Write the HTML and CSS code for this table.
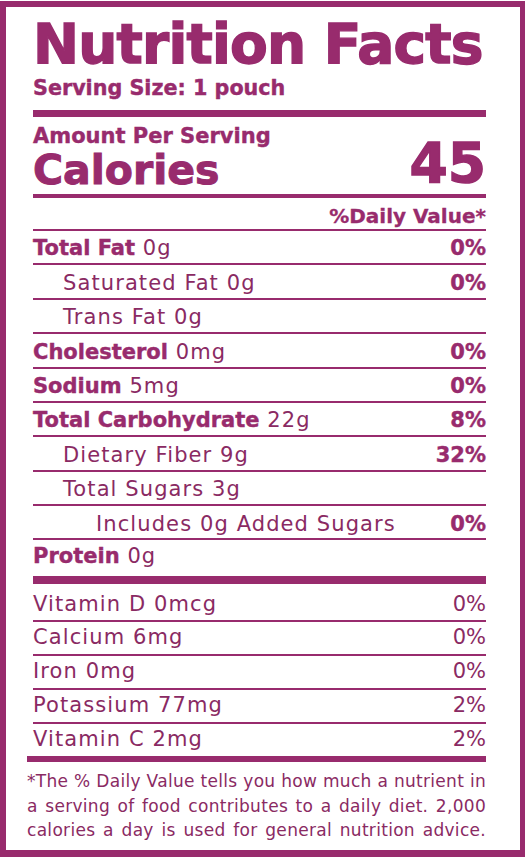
FILE: index.html
```html
<!DOCTYPE html>
<html>
<head>
    <meta charset="utf-8">
    <title>Nutrition Facts</title>
    <link rel="stylesheet" href="styles.css">
</head>
<body>
<div class="label">
    <h1 class="title">Nutrition Facts</h1>
    <div class="serving">Serving Size: 1 pouch</div>
    <div class="bar-thick"></div>

    <div class="cal-block">
        <div class="cal-left">
            <div class="amount">Amount Per Serving</div>
            <div class="cal-label">Calories</div>
        </div>
        <div class="cal-num">45</div>
    </div>
    <div class="bar-mid"></div>

    <div class="dv-head">%Daily Value*</div>

    <div class="rows">
        <div class="row"><span><b>Total Fat</b> 0g</span><b>0%</b></div>
        <div class="row indent"><span>Saturated Fat 0g</span><b>0%</b></div>
        <div class="row indent"><span>Trans Fat 0g</span></div>
        <div class="row"><span><b>Cholesterol</b> 0mg</span><b>0%</b></div>
        <div class="row"><span><b>Sodium</b> 5mg</span><b>0%</b></div>
        <div class="row"><span><b>Total Carbohydrate</b> 22g</span><b>8%</b></div>
        <div class="row indent"><span>Dietary Fiber 9g</span><b>32%</b></div>
        <div class="row indent"><span>Total Sugars 3g</span></div>
        <div class="row indent2"><span>Includes 0g Added Sugars</span><b>0%</b></div>
        <div class="row protein"><span><b>Protein</b> 0g</span></div>
    </div>

    <div class="vitamins">
        <div class="vrow"><span>Vitamin D 0mcg</span><span class="pct">0%</span></div>
        <div class="vrow"><span>Calcium 6mg</span><span class="pct">0%</span></div>
        <div class="vrow"><span>Iron 0mg</span><span class="pct">0%</span></div>
        <div class="vrow"><span>Potassium 77mg</span><span class="pct">2%</span></div>
        <div class="vrow"><span>Vitamin C 2mg</span><span class="pct">2%</span></div>
    </div>

    <div class="footnote">
        <span class="line">*The % Daily Value tells you how much a nutrient in</span>
        <span class="line">a serving of food contributes to a daily diet. 2,000</span>
        <span class="line">calories a day is used for general nutrition advice.</span>
    </div>
</div>
</body>
</html>
```

FILE: styles.css
```css
* {
    box-sizing: border-box;
}

body {
    margin: 0;
    background-color: #fff;
    font-family: "DejaVu Sans", Verdana, sans-serif;
    color: #982b6d;
}

.label {
    width: 525px;
    margin-top: 1px;
    padding: 8px 34px 0 27px;
    border: 6px solid #982b6d;
    border-right-width: 5px;
    border-bottom-width: 7px;
}

.title {
    margin: 0;
    font-size: 55px;
    line-height: 58px;
    font-weight: 700;
    letter-spacing: -0.8px;
    white-space: nowrap;
    -webkit-text-stroke: 1.4px #982b6d;
}

.serving {
    margin-top: 2px;
    font-size: 20.7px;
    line-height: 26px;
    font-weight: 700;
    -webkit-text-stroke: 0.4px #982b6d;
}

.bar-thick {
    height: 7px;
    margin-top: 9.3px;
    background-color: #982b6d;
}

.cal-block {
    display: flex;
    justify-content: space-between;
    align-items: flex-end;
    margin-top: 5.4px;
}

.amount {
    font-size: 21px;
    line-height: 26px;
    font-weight: 700;
    -webkit-text-stroke: 0.4px #982b6d;
}

.cal-label {
    margin-top: 1.6px;
    font-size: 41px;
    line-height: 41px;
    font-weight: 700;
    -webkit-text-stroke: 1px #982b6d;
}

.cal-num {
    font-size: 55px;
    line-height: 55px;
    font-weight: 700;
    -webkit-text-stroke: 1.4px #982b6d;
}

.bar-mid {
    height: 4px;
    margin-top: 2.7px;
    background-color: #982b6d;
}

.dv-head {
    padding-top: 6px;
    padding-bottom: 1px;
    font-size: 20px;
    line-height: 24px;
    font-weight: 700;
    text-align: right;
    -webkit-text-stroke: 0.3px #982b6d;
}

.row {
    display: flex;
    justify-content: space-between;
    height: 34.4px;
    padding-top: 4.5px;
    border-top: 2px solid #982b6d;
    font-size: 21px;
    line-height: 26px;
}

.row > span,
.vrow > span {
    letter-spacing: 1.1px;
    color: #8a2a63;
}

.row b {
    font-weight: 700;
    letter-spacing: 0;
    color: #982b6d;
    -webkit-text-stroke: 0.4px #982b6d;
}

.indent {
    padding-left: 30px;
}

.indent2 {
    padding-left: 63px;
}

.row.protein {
    height: 38px;
    padding-top: 3px;
}

.vitamins {
    border-top: 8px solid #982b6d;
}

.vrow {
    display: flex;
    justify-content: space-between;
    height: 34px;
    padding-top: 2px;
    border-top: 2px solid #982b6d;
    font-size: 21px;
    line-height: 26px;
}

.vrow:first-child {
    height: 36px;
    padding-top: 6.7px;
    border-top: none;
}

.vrow > span.pct {
    letter-spacing: 0;
}

.footnote {
    margin-left: -6px;
    padding-top: 7px;
    padding-bottom: 7px;
    border-top: 6px solid #982b6d;
    font-size: 17px;
    line-height: 24.5px;
    letter-spacing: 0.3px;
    color: #8a2a63;
}

.footnote .line {
    display: block;
    white-space: nowrap;
    text-align: justify;
    text-align-last: justify;
}
```
